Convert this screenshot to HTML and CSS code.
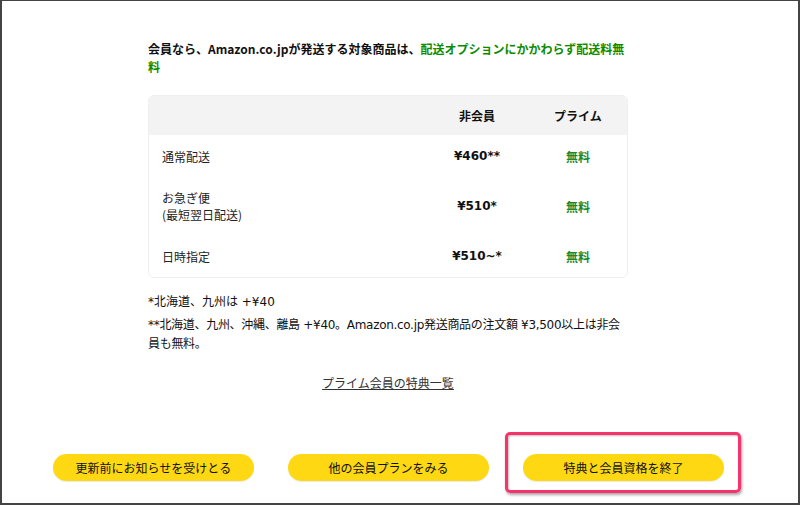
FILE: index.html
```html
<!DOCTYPE html>
<html lang="ja">
<head>
<meta charset="utf-8">
<title>Prime</title>
<link rel="stylesheet" href="styles.css">
</head>
<body>
<div class="frame">
  <div class="content">
    <p class="lead">会員なら、Amazon.co.jpが発送する対象商品は、<span class="green">配送オプションにかかわらず配送料無料</span></p>
    <div class="table-wrap">
      <table class="ship">
        <thead>
          <tr><th class="c-label"></th><th class="c-non">非会員</th><th class="c-prime">プライム</th></tr>
        </thead>
        <tbody>
          <tr class="r1"><td class="c-label">通常配送</td><td class="c-non price">¥460**</td><td class="c-prime free">無料</td></tr>
          <tr class="r2"><td class="c-label">お急ぎ便<br>(最短翌日配送)</td><td class="c-non price">¥510*</td><td class="c-prime free">無料</td></tr>
          <tr class="r3"><td class="c-label">日時指定</td><td class="c-non price">¥510~*</td><td class="c-prime free">無料</td></tr>
        </tbody>
      </table>
    </div>
    <p class="note n1">*北海道、九州は +¥40</p>
    <p class="note n2">**北海道、九州、沖縄、離島 +¥40。Amazon.co.jp発送商品の注文額 ¥3,500以上は非会員も無料。</p>
    <p class="link-row"><a class="link" href="#">プライム会員の特典一覧</a></p>
  </div>
  <div class="buttons">
    <a class="btn" href="#">更新前にお知らせを受けとる</a>
    <a class="btn" href="#">他の会員プランをみる</a>
    <span class="btn-wrap">
      <a class="btn" href="#">特典と会員資格を終了</a>
      <span class="highlight"></span>
    </span>
  </div>
</div>
</body>
</html>
```

FILE: styles.css
```css
* { box-sizing: border-box; }
html, body { margin: 0; padding: 0; background: #fff; }
body {
  font-family: "Noto Sans CJK JP", "Noto Sans", "Liberation Sans", sans-serif;
  color: #0f1111;
}
.frame {
  width: 800px;
  height: 505px;
  border: 2px solid #444;
  border-top-width: 1px;
  padding-top: 39px;
  overflow: hidden;
}
.content {
  width: 480px;
  margin-left: 146px;
}
.lead {
  margin: 0;
  font-size: 12px;
  line-height: 18px;
  font-weight: 700;
  color: #111;
}
.green { color: #0b8c00; }
.table-wrap {
  margin-top: 19px;
  border: 1px solid #efefef;
  border-radius: 6px;
  overflow: hidden;
}
.ship {
  width: 100%;
  border-collapse: collapse;
  font-size: 12px;
}
.ship thead tr { background: #f3f3f3; height: 39px; }
.ship th { font-weight: 700; color: #111; }
.c-label { text-align: left; padding-left: 13px; width: 276px; color: #222; }
.c-non { text-align: center; width: 104px; }
.c-prime { text-align: center; }
.r1 { height: 42px; }
.r2 { height: 58px; }
.r3 { height: 42px; }
.ship td { line-height: 17px; }
.price {
  font-family: "DejaVu Sans", "Noto Sans CJK JP", sans-serif;
  font-weight: 700;
  font-size: 12px;
  color: #111;
}
.free { font-weight: 700; color: #138a36; }
.note {
  margin: 0;
  font-family: "DejaVu Sans", "Noto Sans CJK JP", sans-serif;
  font-size: 12px;
  line-height: 19px;
  color: #111;
}
.n1 { margin-top: 15px; }
.n2 { margin-top: 4px; letter-spacing: -0.3px; }
.link-row {
  margin: 19px 0 0;
  text-align: center;
  font-size: 12px;
  line-height: 19px;
}
.link { color: #333; text-decoration: underline; }
.buttons {
  display: flex;
  gap: 34px;
  margin-top: 62px;
  margin-left: 51px;
}
.btn {
  display: flex;
  align-items: center;
  justify-content: center;
  width: 201px;
  height: 27px;
  border-radius: 14px;
  background: #ffd814;
  color: #0f1111;
  font-size: 12px;
  text-decoration: none;
  box-shadow: 0 1px 1px rgba(213,217,217,0.5);
}
.btn-wrap { position: relative; display: block; }
.highlight {
  position: absolute;
  left: -18px;
  right: -17px;
  top: -22px;
  bottom: -12px;
  border: 3px solid #f7336b;
  border-radius: 5px;
  box-shadow: 1px 2px 3px rgba(0,0,0,0.35), inset 1px 1px 2px rgba(0,0,0,0.25);
  pointer-events: none;
}
```
